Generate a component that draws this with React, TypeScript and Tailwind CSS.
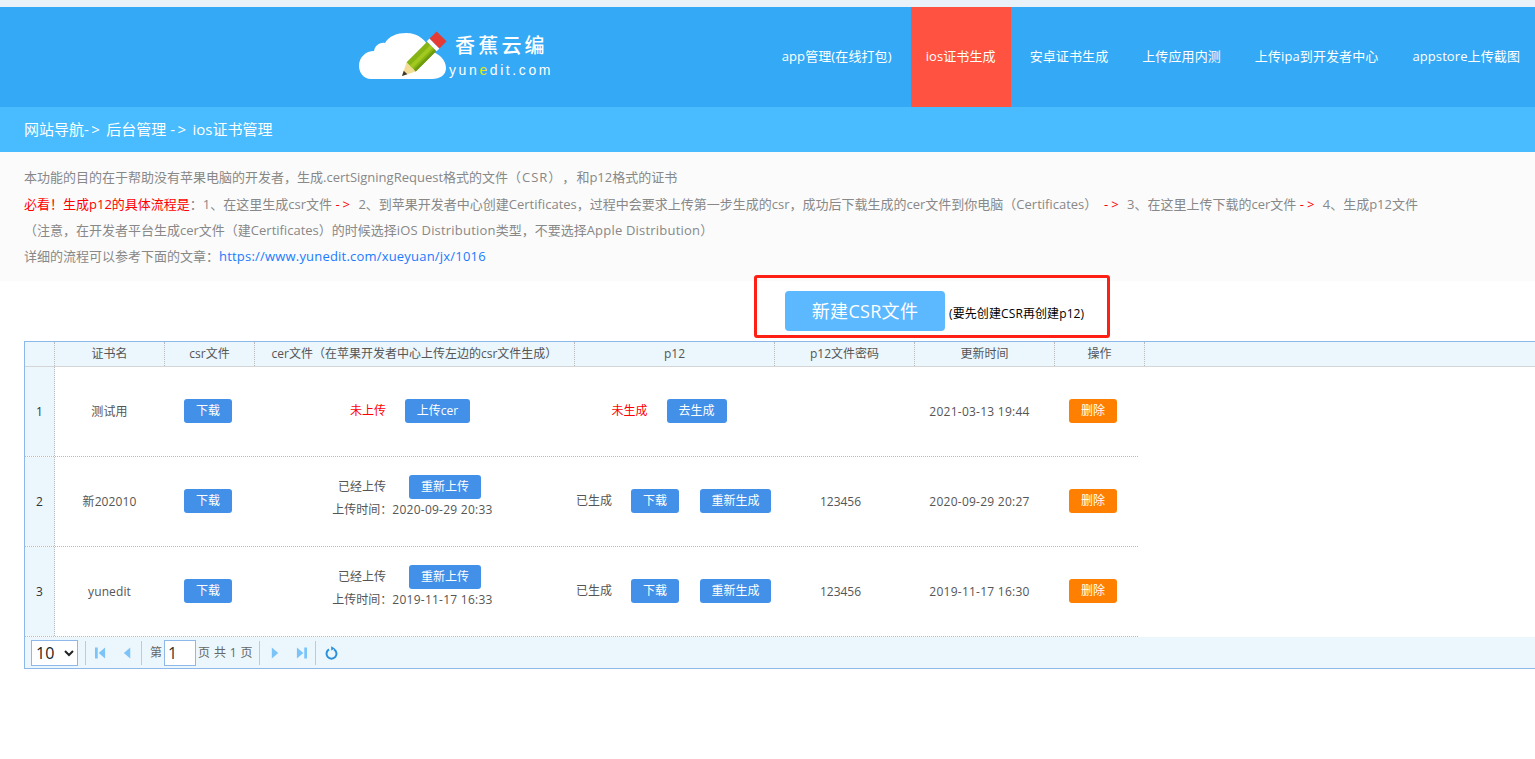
import { useState } from 'react';

const navItems = [
  { label: 'app管理(在线打包)' },
  { label: 'ios证书生成', active: true },
  { label: '安卓证书生成' },
  { label: '上传应用内测' },
  { label: '上传ipa到开发者中心' },
  { label: 'appstore上传截图' },
];

const headCols = [
  { label: '', width: 'w-[30px]' },
  { label: '证书名', width: 'w-[110px]' },
  { label: 'csr文件', width: 'w-[90px]' },
  { label: 'cer文件（在苹果开发者中心上传左边的csr文件生成）', width: 'w-[320px]' },
  { label: 'p12', width: 'w-[200px]' },
  { label: 'p12文件密码', width: 'w-[140px]' },
  { label: '更新时间', width: 'w-[140px]' },
  { label: '操作', width: 'w-[90px]' },
];

const rows = [
  { id: 1, name: '测试用', cer: '', p12: false, password: '', updated: '2021-03-13 19:44' },
  { id: 2, name: '新202010', cer: '2020-09-29 20:33', p12: true, password: '123456', updated: '2020-09-29 20:27' },
  { id: 3, name: 'yunedit', cer: '2019-11-17 16:33', p12: true, password: '123456', updated: '2019-11-17 16:30' },
];

function Logo() {
  return (
    <div className="flex items-center ml-[359px] h-full">
      <svg width="90" height="50" viewBox="0 0 90 50" className="-mt-[3px]">
        <path
          d="M12 48C4 48 0 41 0 35C0 26 7 20 15 20C16 15 20 11 26 12C30 5 38 2 47 2C59 2 68 9 71 20C80 22 87 29 87 37C87 44 81 48 73 48Z"
          fill="#fff"
        />
        <g transform="translate(43 45) rotate(-45)">
          <path d="M0 0L13 -6.5V6.5Z" fill="#f2dc96" />
          <path d="M0 0L5 -2.5V2.5Z" fill="#3a3a32" />
          <rect x="13" y="-6.5" width="29" height="13" fill="#86b414" />
          <rect x="13" y="-2" width="29" height="4" fill="#a0c81e" />
          <rect x="13" y="4" width="29" height="2.5" fill="#6c9a10" />
          <rect x="42" y="-7" width="4" height="14" fill="#fff" />
          <rect x="46" y="-7" width="10" height="14" fill="#e53b35" />
        </g>
      </svg>
      <div className="-mt-px text-white">
        <div className="ml-[6px] text-[20px] leading-[26px] tracking-[3.2px] font-medium">香蕉云编</div>
        <div className="pt-px text-[14px] leading-[20px] tracking-[2.6px] font-['Liberation_Sans',sans-serif]">
          yun<span className="text-[#e6e619]">e</span>dit.com
        </div>
      </div>
    </div>
  );
}

function Btn({ children, w, orange }: { children: string; w: string; orange?: boolean }) {
  return (
    <button
      type="button"
      className={`${w} h-6 mb-[2px] pt-px shrink-0 rounded-[3px] text-white text-[12px] leading-[22px] text-center ${orange ? 'bg-[#ff8000]' : 'bg-[#4290e8]'}`}
    >
      {children}
    </button>
  );
}

function PagerIcon({ d }: { d: string }) {
  return (
    <svg width="11" height="12" viewBox="0 0 12 12" fill="#7cc4f8">
      <path d={d} />
    </svg>
  );
}

function Sep() {
  return <div className="w-px h-6 bg-[#c8c8c8]" />;
}

function Arrow() {
  return <span className="text-[#f00] tracking-[3px] mr-[2px]">-&gt;</span>;
}

function Pager() {
  const [page, setPage] = useState('1');
  return (
    <div className="flex items-center h-[31px] bg-[#ebf7fd] pl-[6px] text-[12px] text-[#666]">
      <select className="w-[47px] h-[26px] bg-white border border-[#8fb8ea] text-[16px] text-[#222]">
        <option>10</option>
        <option>20</option>
      </select>
      <div className="ml-[7px]"><Sep /></div>
      <div className="ml-[9px]"><PagerIcon d="M0 0H3V12H0ZM11 0V12L4 6Z" /></div>
      <div className="ml-[16px]"><PagerIcon d="M9 0V12L2 6Z" /></div>
      <div className="ml-[8px]"><Sep /></div>
      <span className="ml-2 w-[14px]">第</span>
      <input
        value={page}
        onChange={(e) => setPage(e.target.value)}
        className="w-[32px] h-[26px] bg-white border border-[#8fb8ea] pl-[3px] text-[16px] text-[#333] outline-none"
      />
      <span className="ml-[2px] w-[61px] tracking-[0.4px] whitespace-nowrap">页 共 1 页</span>
      <Sep />
      <div className="ml-[10px]"><PagerIcon d="M2 0V12L9 6Z" /></div>
      <div className="ml-[15px]"><PagerIcon d="M1 0V12L8 6ZM9 0H12V12H9Z" /></div>
      <div className="ml-[8px]"><Sep /></div>
      <svg width="13" height="14" viewBox="0 0 13 14" className="ml-[9px]" fill="none" stroke="#2b90dc" strokeWidth="2">
        <path d="M4 3.4A5 5 0 1 0 9 3.4" />
        <path d="M3.2 0.6V5L7 3Z" fill="#2b90dc" stroke="none" transform="translate(3 -0.4)" />
      </svg>
    </div>
  );
}

function Row({ row }: { row: (typeof rows)[number] }) {
  return (
    <div className="flex w-[1113px] h-[90px] border-b border-dotted border-[#bbb] text-[12px] text-[#555]">
      <div className="w-[30px] bg-[#ebf7fd] border-r border-dotted border-[#bbb] flex items-center justify-center text-[#333]">
        {row.id}
      </div>
      <div className="w-[109px] flex items-center justify-center tracking-[0.1px]">{row.name}</div>
      <div className="w-[89px] pr-px flex items-center justify-center"><Btn w="w-12">下载</Btn></div>
      <div className="w-[319px] flex flex-col items-center justify-center">
        {row.cer ? (
          <div className="flex flex-col items-center pb-[10px]">
            <div className="flex items-center pr-[6px]">
              <span className="-mt-[2px]">已经上传</span>
              <div className="ml-[23px]"><Btn w="w-[72px]">重新上传</Btn></div>
            </div>
            <div className="leading-[18px]">上传时间：<span className="tracking-[0.25px]">{row.cer}</span></div>
          </div>
        ) : (
          <div className="flex items-center pr-[5px]">
            <span className="-mt-[2px] text-[#f00]">未上传</span>
            <div className="ml-[19px]"><Btn w="w-[65px]">上传cer</Btn></div>
          </div>
        )}
      </div>
      <div className={`w-[199px] flex items-center justify-center ${row.p12 ? 'pl-1' : 'pr-[5px]'}`}>
        {row.p12 ? (
          <>
            <span className="-mt-[2px]">已生成</span>
            <div className="ml-[19px]"><Btn w="w-12">下载</Btn></div>
            <div className="ml-[21px]"><Btn w="w-[71px]">重新生成</Btn></div>
          </>
        ) : (
          <>
            <span className="-mt-[2px] text-[#f00]">未生成</span>
            <div className="ml-[19px]"><Btn w="w-[60px]">去生成</Btn></div>
          </>
        )}
      </div>
      <div className="w-[139px] flex items-center justify-center">{row.password}</div>
      <div className="w-[139px] flex items-center justify-center tracking-[0.25px]">{row.updated}</div>
      <div className="w-[89px] pr-px flex items-center justify-center"><Btn w="w-12" orange>删除</Btn></div>
    </div>
  );
}

export default function App() {
  return (
    <div className="relative w-full h-[759px] overflow-hidden bg-white font-['Open_Sans','Noto_Sans_CJK_SC',sans-serif] [text-spacing-trim:space-all]">
      <div className="h-[7px] bg-[#e8f2f8]" />

      <header className="flex justify-between h-[100px] bg-[#34a9f5]">
        <Logo />
        <nav className="flex gap-1">
          {navItems.map((item) => (
            <a
              key={item.label}
              className={`flex items-center px-[15px] text-[13px] tracking-[0.1px] text-white whitespace-nowrap ${item.active ? 'bg-[#ff5240]' : ''}`}
            >
              {item.label}
            </a>
          ))}
        </nav>
      </header>

      <div className="flex items-center h-[45px] pl-6 bg-[#48bcfe] text-[15px] text-white whitespace-pre">
        <span>网站导航<span className="tracking-[2.5px]">-&gt;</span> 后台管理 <span className="tracking-[2.5px]">-&gt;</span> ios证书管理</span>
      </div>

      <div className="h-[129px] py-3 pl-6 bg-[#fbfbfb] text-[13px] leading-[26px] text-[#888] whitespace-pre">
        <p className="mb-px">本功能的目的在于帮助没有苹果电脑的开发者，生成.certSigningRequest格式的文件<span className="tracking-[1px]">（CSR），</span>和p12格式的证书</p>
        <p>
          <span className="text-[#f00]">必看！生成p12的具体流程是</span>：1、在这里生成csr文件 <Arrow /> 2、到苹果开发者中心创建Certificates，过程中会要求上传第一步生成的csr，成功后下载生成的cer文件到你电脑（Certificates）  <Arrow /> 3、在这里上传下载的cer文件 <Arrow /> 4、生成p12文件
        </p>
        <p>（注意，在开发者平台生成cer文件（建Certificates）的时候选择<span className="tracking-[0.2px]">iOS Distribution</span>类型，不要选择<span className="tracking-[0.2px]">Apple Distribution</span>）</p>
        <p>
          详细的流程可以参考下面的文章：<a className="text-[#1a7aff] tracking-[0.2px]">https://www.yunedit.com/xueyuan/jx/1016</a>
        </p>
      </div>

      <div className="flex h-[60px] pt-[10px] pl-[785px]">
        <button type="button" className="w-40 h-10 rounded bg-[#5cb8ff] text-white text-[18px] tracking-[0.3px]">
          新建CSR文件
        </button>
        <span className="ml-1 mt-[15px] text-[12px] leading-[16px] tracking-[0.1px] text-black whitespace-nowrap">(要先创建CSR再创建p12)</span>
      </div>

      {/* annotation drawn over the page */}
      <div className="absolute left-[754px] top-[275px] w-[356px] h-[63px] border-[3px] border-[#ff2015] rounded-[3px]" />

      <div className="ml-6 border-l border-y border-[#8fb8ea]">
        <div className="flex h-[25px] bg-[#ebf7fd] border-b border-[#d5d5d5] text-[12px] text-[#555]">
          {headCols.map((col) => (
            <div
              key={col.label}
              className={`${col.width} shrink-0 flex items-center justify-center border-r border-dotted border-[#bbb] whitespace-nowrap`}
            >
              {col.label}
            </div>
          ))}
        </div>
        {rows.map((row) => (
          <Row key={row.id} row={row} />
        ))}
        <Pager />
      </div>
    </div>
  );
}
